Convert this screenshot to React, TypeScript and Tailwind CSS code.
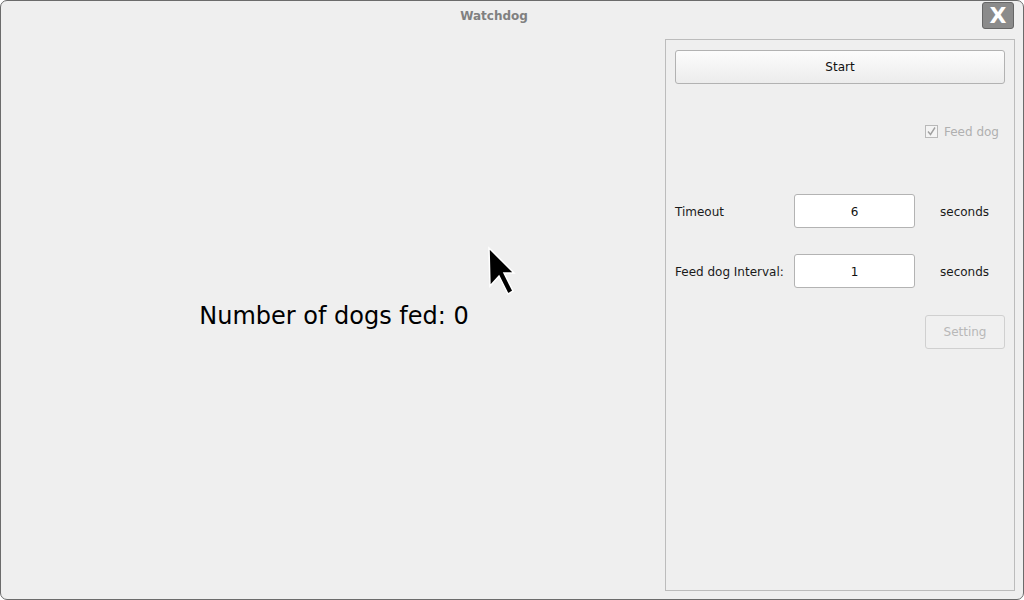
import React from "react";

const font = { fontFamily: '"DejaVu Sans", Verdana, sans-serif' };

const Row = ({ label, value }: { label: string; value: string }) => (
  <div className="flex items-center h-[34px]">
    <span className="w-[119px] text-[12px] text-[#1a1a1a] pt-[1px]">{label}</span>
    <div className="w-[121px] h-[34px] bg-white border border-[#b3b3b3] rounded-[3px] flex items-center justify-center text-[12px] text-[#111] pt-[1px]">
      {value}
    </div>
    <span className="ml-[25px] text-[12px] text-[#1a1a1a] pt-[1px]">seconds</span>
  </div>
);

export default function App() {
  return (
    <div
      className="relative w-[1024px] h-[600px] bg-[#efefef] border border-[#6b6b6b] rounded-[7px] overflow-hidden flex flex-col"
      style={font}
    >
      {/* title bar */}
      <div className="relative h-[38px] shrink-0">
        <div className="absolute left-0 right-0 top-[6px] text-center text-[12px] font-bold text-[#808080] pr-[36px]">
          Watchdog
        </div>
        <button className="absolute right-[9px] top-[1px] w-[32px] h-[27px] bg-[#8b8b8b] border border-[#666] rounded-[3px] flex items-center justify-center text-white font-bold text-[22px] leading-none">
          X
        </button>
      </div>

      <div className="flex flex-1 pb-[8px] pr-[8px]">
        {/* left area */}
        <div className="flex-1 flex items-center justify-center pt-[2px]">
          <span className="text-[24px] text-black ml-[2px]">Number of dogs fed: 0</span>
        </div>

        {/* right panel */}
        <div className="w-[350px] border border-[#bcbcbc] px-[9px] pt-[10px] flex flex-col">
          <button className="h-[34px] w-full border border-[#b2b2b2] rounded-[3px] bg-gradient-to-b from-[#fcfcfc] to-[#ececec] text-[12px] text-[#111]">
            Start
          </button>
          <div className="flex justify-end items-center mt-[40px] h-[14px] pr-[6px]">
            <span className="w-[13px] h-[13px] border border-[#b9b9b9] bg-[#f4f4f4] flex items-center justify-center">
              <svg width="11" height="11" viewBox="0 0 11 11">
                <path d="M2 5.5 L4.5 8.5 L9 1.5" fill="none" stroke="#a0a0a0" strokeWidth="1.4" />
              </svg>
            </span>
            <span className="ml-[6px] text-[12px] text-[#b0b0b0] pt-[1px]">Feed dog</span>
          </div>
          <div className="mt-[56px]">
            <Row label="Timeout" value="6" />
          </div>
          <div className="mt-[26px]">
            <Row label="Feed dog Interval:" value="1" />
          </div>
          <div className="flex justify-end mt-[27px]">
            <button className="w-[80px] h-[34px] border border-[#d0d0d0] rounded-[3px] bg-[#f0f0f0] text-[12px] text-[#b8b8b8]">
              Setting
            </button>
          </div>
        </div>
      </div>

      {/* mouse cursor */}
      <svg className="absolute left-[485px] top-[245px]" width="32" height="52" viewBox="0 0 32 52">
        <path
          d="M3 2 L28 27 L18 27 L27 45 L22 48 L13 30 L4 40 Z"
          fill="#000"
          stroke="#fff"
          strokeWidth="1.5"
          strokeLinejoin="miter"
        />
      </svg>
    </div>
  );
}
